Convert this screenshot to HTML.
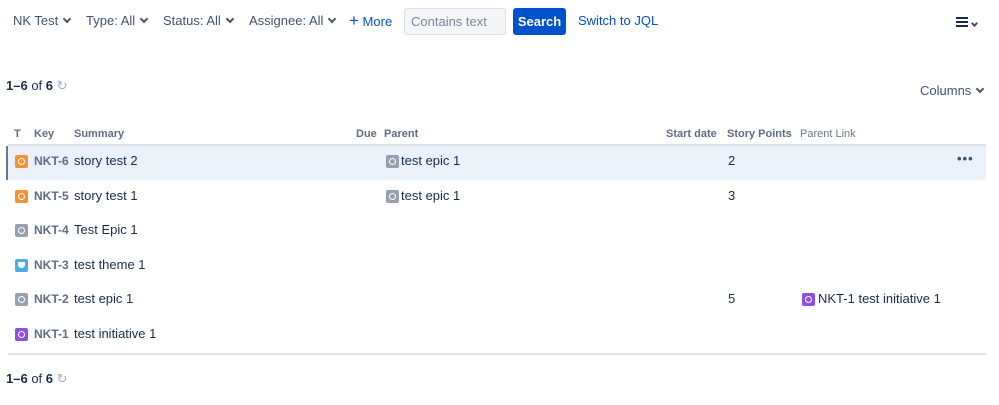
<!DOCTYPE html>
<html><head><meta charset="utf-8"><style>
body{margin:0;width:999px;height:405px;background:#fff;font-family:"Liberation Sans",sans-serif;color:#172b4d;position:relative;overflow:hidden}
.a{position:absolute;white-space:nowrap;line-height:16px}
.f{font-size:13px;color:#42526e;top:13px}
.car{display:inline-block;width:4px;height:4px;border-right:2px solid #42526e;border-bottom:2px solid #42526e;transform:rotate(45deg);margin-left:6px;position:relative;top:-3px}
.h{font-size:11px;font-weight:bold;color:#5e6c84;top:126px}
.k{font-size:12px;font-weight:bold;color:#5e6c84}
.s{font-size:13px;color:#172b4d}
.ic{position:absolute;width:13px;height:13px;border-radius:2px}
.ic::after{content:"";position:absolute;left:3px;top:3px;width:5px;height:5px;border:1px solid #fff;border-radius:50%}
.st{background:#f79232}.ep{background:#97a0af}.th{background:#4bade8}.in{background:#904ee2}
.th::after{border-radius:0 0 50% 50%;background:#fff;width:5px;height:4px}
</style></head><body>
<div class="a f" style="left:13px">NK Test<span class="car"></span></div>
<div class="a f" style="left:86px">Type: All<span class="car"></span></div>
<div class="a f" style="left:163px">Status: All<span class="car"></span></div>
<div class="a f" style="left:249px">Assignee: All<span class="car"></span></div>
<div class="a f" style="left:349px;color:#0052cc"><b style="font-size:17px;font-weight:normal">+</b> More</div>
<div class="a" style="left:404px;top:8px;width:102px;height:27px;background:#f4f5f7;border:1px solid #dfe1e6;border-radius:3px;box-sizing:border-box;font-size:13px;color:#7a869a;padding:5px 6px">Contains text</div>
<div class="a" style="left:513px;top:8px;width:53px;height:27px;background:#0052cc;border-radius:3px;color:#fff;font-weight:bold;font-size:13px;text-align:center;line-height:27px">Search</div>
<div class="a f" style="left:578px;color:#0052cc">Switch to JQL</div>
<div class="a" style="left:956px;top:17px;width:12px;height:2px;background:#172b4d;box-shadow:0 4px 0 #172b4d,0 8px 0 #172b4d"></div>
<div class="a" style="left:972px;top:17px"><span class="car" style="width:3px;height:3px;margin:0"></span></div>
<div class="a s" style="left:6px;top:78px"><b>1–6</b> of <b>6</b> <span style="color:#a5adba;font-size:13px">↻</span></div>
<div class="a s" style="left:920px;top:83px;color:#42526e">Columns<span class="car"></span></div>
<div class="a h" style="left:14px">T</div><div class="a h" style="left:34px">Key</div><div class="a h" style="left:74px">Summary</div><div class="a h" style="left:356px">Due</div><div class="a h" style="left:384px">Parent</div><div class="a h" style="left:666px">Start date</div><div class="a h" style="left:727px">Story Points</div><div class="a h" style="left:800px;font-weight:normal;color:#6b778c">Parent Link</div>
<div class="a" style="left:8px;top:144px;width:978px;height:2px;background:#dfe1e6"></div>
<div class="a" style="left:8px;top:146px;width:978px;height:34px;background:#ebf1f9"></div>
<div class="a" style="left:6px;top:146px;width:2px;height:34px;background:#6b778c"></div>
<div class="a" style="left:8px;top:353px;width:978px;height:2px;background:#dfe1e6"></div>

<div class="ic st" style="left:15px;top:155px"></div><div class="a k" style="left:34px;top:153px">NKT-6</div><div class="a s" style="left:74px;top:153px">story test 2</div><div class="ic ep" style="left:386px;top:155px"></div><div class="a s" style="left:401px;top:153px">test epic 1</div><div class="a s" style="left:728px;top:153px">2</div><div class="a s" style="left:957px;top:151px;font-weight:bold;letter-spacing:1px;color:#42526e">•••</div>
<div class="ic st" style="left:15px;top:190px"></div><div class="a k" style="left:34px;top:188px">NKT-5</div><div class="a s" style="left:74px;top:188px">story test 1</div><div class="ic ep" style="left:386px;top:190px"></div><div class="a s" style="left:401px;top:188px">test epic 1</div><div class="a s" style="left:728px;top:188px">3</div>
<div class="ic ep" style="left:15px;top:224px"></div><div class="a k" style="left:34px;top:222px">NKT-4</div><div class="a s" style="left:74px;top:222px">Test Epic 1</div>
<div class="ic th" style="left:15px;top:259px"></div><div class="a k" style="left:34px;top:257px">NKT-3</div><div class="a s" style="left:74px;top:257px">test theme 1</div>
<div class="ic ep" style="left:15px;top:293px"></div><div class="a k" style="left:34px;top:291px">NKT-2</div><div class="a s" style="left:74px;top:291px">test epic 1</div><div class="a s" style="left:728px;top:291px">5</div><div class="ic in" style="left:802px;top:293px"></div><div class="a s" style="left:818px;top:291px">NKT-1 test initiative 1</div>
<div class="ic in" style="left:15px;top:328px"></div><div class="a k" style="left:34px;top:326px">NKT-1</div><div class="a s" style="left:74px;top:326px">test initiative 1</div>
<div class="a s" style="left:6px;top:371px"><b>1–6</b> of <b>6</b> <span style="color:#a5adba;font-size:13px">↻</span></div>
</body></html>
